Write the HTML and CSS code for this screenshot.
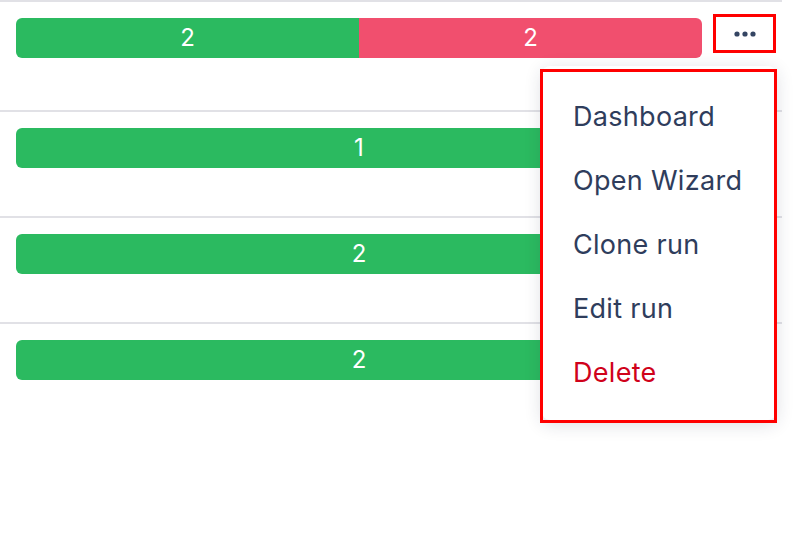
FILE: index.html
```html
<!DOCTYPE html>
<html lang="en">
<head>
<meta charset="utf-8">
<title>Runs</title>
<link rel="stylesheet" href="styles.css">
</head>
<body>
<div class="list">
  <div class="row row-first">
    <div class="bar">
      <div class="seg seg-pass" style="flex: 2">2</div>
      <div class="seg seg-fail" style="flex: 2">2</div>
    </div>
    <button class="more more-active" aria-label="More actions">
      <svg width="22" height="6" viewBox="0 0 22 6"><circle cx="3" cy="3" r="2.6"/><circle cx="11" cy="3" r="2.6"/><circle cx="19" cy="3" r="2.6"/></svg>
    </button>
  </div>
  <div class="row">
    <div class="bar"><div class="seg seg-pass" style="flex: 1">1</div></div>
    <button class="more" aria-label="More actions"></button>
  </div>
  <div class="row">
    <div class="bar"><div class="seg seg-pass" style="flex: 1">2</div></div>
    <button class="more" aria-label="More actions"></button>
  </div>
  <div class="row">
    <div class="bar"><div class="seg seg-pass" style="flex: 1">2</div></div>
    <button class="more" aria-label="More actions"></button>
  </div>

  <ul class="menu">
    <li class="menu-item">Dashboard</li>
    <li class="menu-item">Open Wizard</li>
    <li class="menu-item">Clone run</li>
    <li class="menu-item">Edit run</li>
    <li class="menu-item menu-danger">Delete</li>
  </ul>
</div>
</body>
</html>
```

FILE: styles.css
```css
* { box-sizing: border-box; }
html, body { margin: 0; padding: 0; background: #ffffff; }
body {
  font-family: Inter, "Noto Sans", sans-serif;
  width: 808px;
  height: 548px;
  overflow: hidden;
}
.list {
  position: relative;
  width: 782px;
}
.row {
  display: flex;
  align-items: flex-start;
  border-top: 2px solid #e1e1e6;
  padding: 16px 6px 48px 16px;
  gap: 11px;
}
.row-first { padding-bottom: 52px; }
.bar {
  flex: 1;
  display: flex;
  height: 40px;
  border-radius: 6px;
  overflow: hidden;
}
.seg {
  display: flex;
  align-items: center;
  justify-content: center;
  color: #ffffff;
  font-size: 24px;
  line-height: 1;
}
.seg-pass { background: #2bba60; }
.seg-fail { background: #f14f6e; }
.more {
  width: 63px;
  height: 39px;
  margin-top: -4px;
  border: 3px solid transparent;
  background: transparent;
  padding: 0;
  display: flex;
  align-items: center;
  justify-content: center;
}
.more-active { border-color: #ff0000; }
.more svg { fill: #344563; display: block; }
.menu {
  position: absolute;
  left: 542px;
  top: 66px;
  width: 234px;
  margin: 0;
  padding: 18px 0 16px;
  list-style: none;
  background: #ffffff;
  border-radius: 8px;
  box-shadow: 0 4px 18px rgba(30, 40, 70, 0.16);
}
.menu::after {
  content: "";
  position: absolute;
  left: -2px;
  top: 3px;
  right: -1px;
  bottom: -3px;
  border: 3px solid #ff0000;
  pointer-events: none;
}
.menu-item {
  height: 64px;
  display: flex;
  align-items: center;
  padding-left: 31px;
  font-size: 27px;
  letter-spacing: 0.3px;
  color: #2f3d5c;
}
.menu-danger { color: #d0021b; }
```
